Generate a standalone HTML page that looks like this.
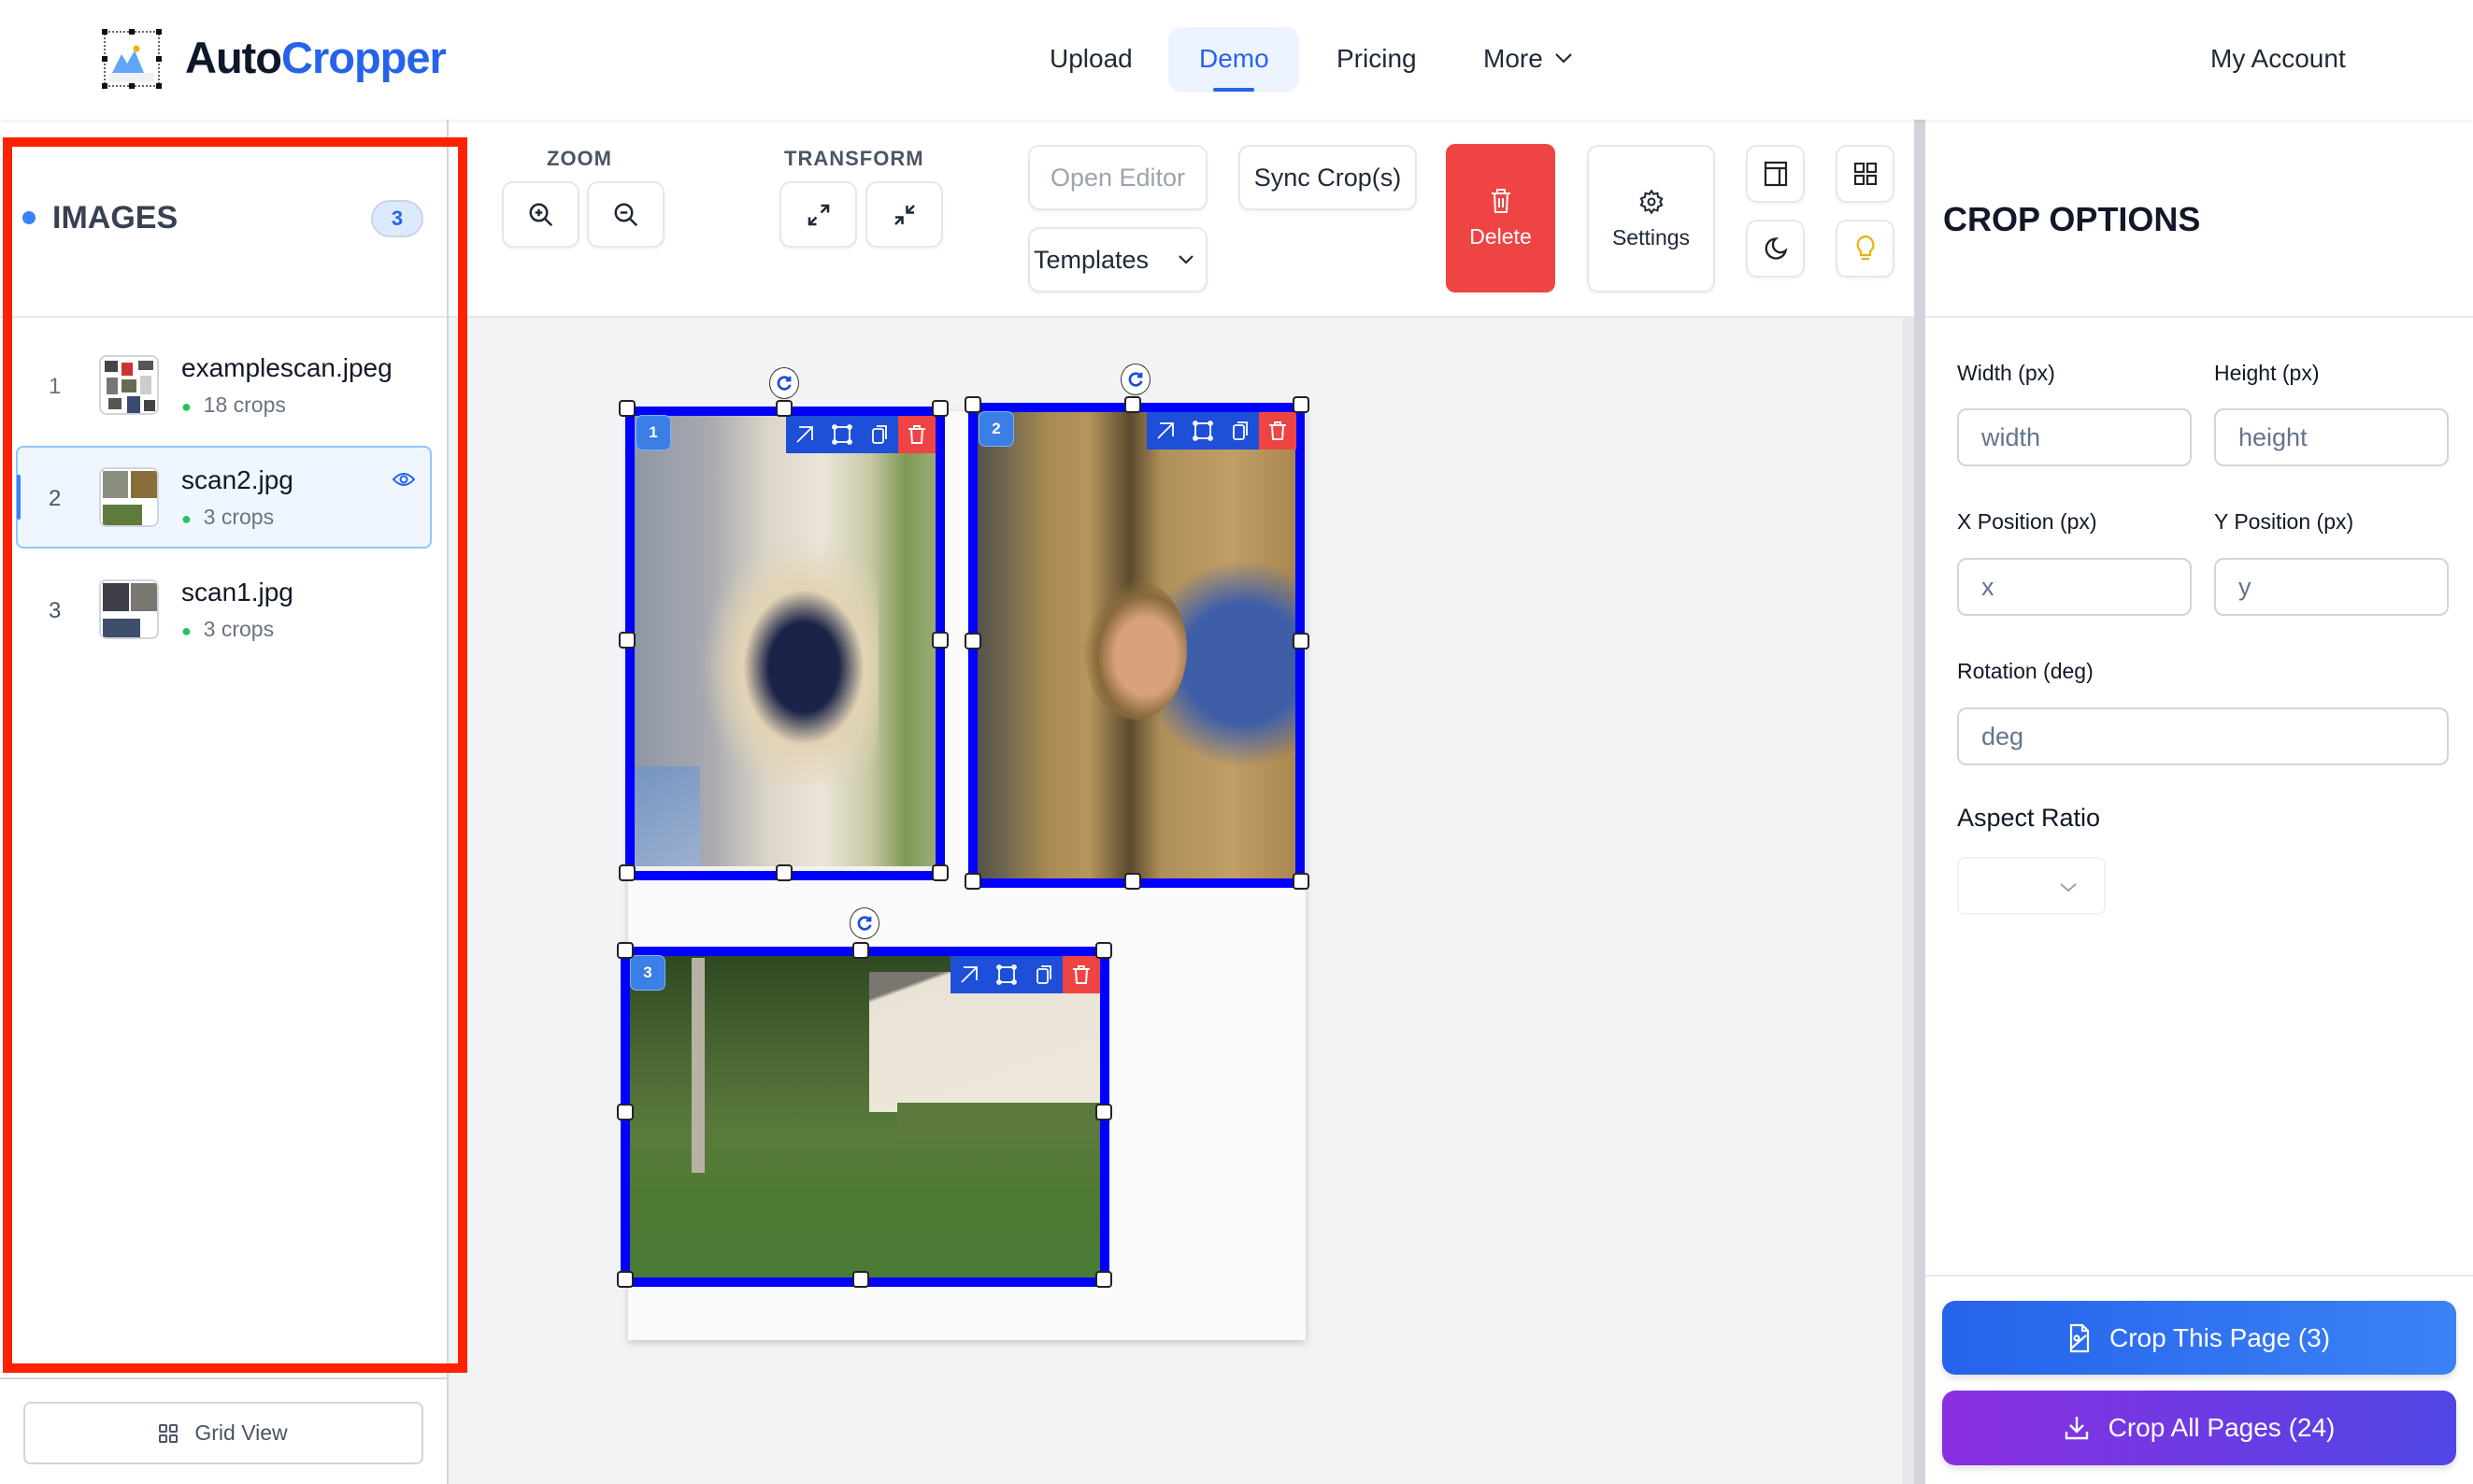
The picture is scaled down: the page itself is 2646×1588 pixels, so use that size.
<!DOCTYPE html>
<html><head><meta charset="utf-8">
<style>
*{box-sizing:border-box;margin:0;padding:0}
body{width:2646px;height:1588px;overflow:hidden;background:#fff;font-family:"Liberation Sans",Arial,sans-serif;position:relative;color:#111827}
.a{position:absolute}
.btn{position:absolute;background:#fff;border:2px solid #e5e7eb;border-radius:12px;display:flex;align-items:center;justify-content:center;box-shadow:0 2px 3px rgba(0,0,0,.05)}
.lbl{position:absolute;font-size:23px;color:#111827}
.inp{position:absolute;border:2px solid #d1d5db;border-radius:10px;background:#fff;font-size:27px;color:#64748b;padding-left:24px;display:flex;align-items:center}
.h{position:absolute;width:18px;height:18px;background:#fff;border:2px solid #222;border-radius:4px}
.rot{position:absolute;width:32px;height:34px;border-radius:50%;background:#fff;border:1.5px solid #333;display:flex;align-items:center;justify-content:center}
.num{position:absolute;width:38px;height:38px;border-radius:7px;background:#3b7ee6;border:1.5px solid #7fb0f5;color:#fff;font-weight:bold;font-size:17px;display:flex;align-items:center;justify-content:center}
.tb{position:absolute;height:40px;display:flex}
.tb div{width:40px;height:40px;background:#1d4fd8;display:flex;align-items:center;justify-content:center}
.tb div.r{background:#ef4444}
</style></head><body>
<!-- header -->
<div class="a" style="left:0;top:0;width:2646px;height:128px;background:#fff;box-shadow:0 2px 4px rgba(0,0,0,.06);z-index:3"></div>
<svg class="a" style="left:108px;top:30px;z-index:4" width="68" height="66" viewBox="0 0 68 66">
<rect x="4" y="4" width="58" height="58" fill="none" stroke="#333" stroke-width="1.5" stroke-dasharray="2 2"/>
<g fill="#111"><rect x="1" y="1" width="6" height="6"/><rect x="30" y="1" width="6" height="6"/><rect x="59" y="1" width="6" height="6"/><rect x="1" y="30" width="6" height="6"/><rect x="59" y="30" width="6" height="6"/><rect x="1" y="59" width="6" height="6"/><rect x="30" y="59" width="6" height="6"/><rect x="59" y="59" width="6" height="6"/></g>
<rect x="9" y="48" width="48" height="10" fill="#eef2f7"/>
<path d="M12 48 L22 28 L28 38 L36 24 L46 48Z" fill="#60a5fa"/><circle cx="38" cy="22" r="3.5" fill="#eab308"/>
</svg>
<div class="a" style="left:198px;top:34px;font-size:47px;font-weight:bold;letter-spacing:-1px;z-index:4"><span style="color:#0f172a">Auto</span><span style="color:#2563eb">Cropper</span></div>
<div class="a" style="left:1123px;top:47px;font-size:28px;color:#1f2937;z-index:4">Upload</div>
<div class="a" style="left:1250px;top:29px;width:140px;height:70px;background:#eef4ff;border-radius:14px;z-index:4"></div>
<div class="a" style="left:1283px;top:47px;font-size:28px;color:#2563eb;z-index:4">Demo</div>
<div class="a" style="left:1298px;top:94px;width:44px;height:4px;background:#2563eb;border-radius:2px;z-index:4"></div>
<div class="a" style="left:1430px;top:47px;font-size:28px;color:#1f2937;z-index:4">Pricing</div>
<div class="a" style="left:1587px;top:47px;font-size:28px;color:#1f2937;z-index:4">More</div>
<svg class="a" style="left:1662px;top:54px;z-index:4" width="22" height="16" viewBox="0 0 22 16"><path d="M3 4 L11 12 L19 4" fill="none" stroke="#1f2937" stroke-width="2.2"/></svg>
<div class="a" style="left:2365px;top:47px;font-size:28px;color:#1f2937;z-index:4">My Account</div>

<!-- left sidebar -->
<div class="a" style="left:0;top:128px;width:480px;height:1460px;background:#fff;border-right:2px solid #d1d5db"></div>
<div class="a" style="left:24px;top:226px;width:14px;height:14px;border-radius:50%;background:#3b82f6"></div>
<div class="a" style="left:56px;top:214px;font-size:34px;font-weight:bold;color:#374151">IMAGES</div>
<div class="a" style="left:397px;top:214px;width:56px;height:40px;border-radius:20px;background:#dbeafe;border:2px solid #cbd5e1;color:#2563eb;font-size:22px;font-weight:bold;display:flex;align-items:center;justify-content:center">3</div>
<div class="a" style="left:0;top:338px;width:478px;height:2px;background:#e5e7eb"></div>

<div class="a" style="left:52px;top:400px;font-size:24px;color:#6b7280">1</div>
<div class="a" style="left:106px;top:380px;width:64px;height:64px;border:2px solid #d1d5db;border-radius:8px;overflow:hidden;background:#fff">
<div class="a" style="left:4px;top:4px;width:14px;height:12px;background:#444"></div><div class="a" style="left:22px;top:6px;width:12px;height:14px;background:#c33"></div><div class="a" style="left:40px;top:4px;width:16px;height:10px;background:#555"></div><div class="a" style="left:6px;top:22px;width:12px;height:18px;background:#777"></div><div class="a" style="left:22px;top:24px;width:16px;height:14px;background:#6a6a50"></div><div class="a" style="left:42px;top:20px;width:12px;height:20px;background:#ccc"></div><div class="a" style="left:8px;top:44px;width:14px;height:12px;background:#555"></div><div class="a" style="left:28px;top:42px;width:14px;height:18px;background:#3a4a70"></div><div class="a" style="left:46px;top:46px;width:12px;height:12px;background:#444"></div></div>
<div class="a" style="left:194px;top:378px;font-size:28px;color:#111827">examplescan.jpeg</div>
<div class="a" style="left:194px;top:420px;font-size:23px;color:#6b7280"><span style="color:#22c55e;font-size:18px">●</span>&nbsp; 18 crops</div>

<div class="a" style="left:17px;top:477px;width:445px;height:110px;border:2px solid #93c5fd;border-radius:8px;background:#eff6ff"></div>
<div class="a" style="left:18px;top:508px;width:4px;height:48px;background:#3b82f6;border-radius:2px"></div>
<div class="a" style="left:52px;top:520px;font-size:24px;color:#4b5563">2</div>
<div class="a" style="left:106px;top:500px;width:64px;height:64px;border:2px solid #d1d5db;border-radius:8px;overflow:hidden;background:#fff">
<div class="a" style="left:2px;top:2px;width:27px;height:29px;background:#8a8e80"></div><div class="a" style="left:32px;top:2px;width:28px;height:29px;background:#8a6e3a"></div><div class="a" style="left:2px;top:38px;width:42px;height:24px;background:#5e7a3c"></div></div>
<div class="a" style="left:194px;top:498px;font-size:28px;color:#111827">scan2.jpg</div>
<div class="a" style="left:194px;top:540px;font-size:23px;color:#6b7280"><span style="color:#22c55e;font-size:18px">●</span>&nbsp; 3 crops</div>
<svg class="a" style="left:420px;top:503px" width="24" height="20" viewBox="0 0 24 20"><path d="M1 10 Q12 -2 23 10 Q12 22 1 10Z" fill="none" stroke="#2563eb" stroke-width="2"/><circle cx="12" cy="10" r="3.5" fill="none" stroke="#2563eb" stroke-width="2"/></svg>

<div class="a" style="left:52px;top:640px;font-size:24px;color:#4b5563">3</div>
<div class="a" style="left:106px;top:620px;width:64px;height:64px;border:2px solid #d1d5db;border-radius:8px;overflow:hidden;background:#fff">
<div class="a" style="left:2px;top:2px;width:28px;height:30px;background:#3e3f48"></div><div class="a" style="left:32px;top:2px;width:28px;height:30px;background:#7a7770"></div><div class="a" style="left:2px;top:40px;width:40px;height:22px;background:#3f4e6a"></div></div>
<div class="a" style="left:194px;top:618px;font-size:28px;color:#111827">scan1.jpg</div>
<div class="a" style="left:194px;top:660px;font-size:23px;color:#6b7280"><span style="color:#22c55e;font-size:18px">●</span>&nbsp; 3 crops</div>

<div class="a" style="left:0;top:1474px;width:478px;height:2px;background:#d1d5db"></div>
<div class="a" style="left:25px;top:1500px;width:428px;height:67px;border:2px solid #d1d5db;border-radius:8px;display:flex;align-items:center;justify-content:center;font-size:23px;color:#4b5563">
<svg width="20" height="20" viewBox="0 0 20 20" style="margin-right:18px"><g fill="none" stroke="#4b5563" stroke-width="2"><rect x="1" y="1" width="7" height="7" rx="1"/><rect x="12" y="1" width="7" height="7" rx="1"/><rect x="1" y="12" width="7" height="7" rx="1"/><rect x="12" y="12" width="7" height="7" rx="1"/></g></svg>Grid View</div>
<!-- red annotation box -->
<div class="a" style="left:3px;top:147px;width:497px;height:1322px;border:10px solid #ff2200;z-index:5"></div>

<!-- toolbar -->
<div class="a" style="left:480px;top:338px;width:1568px;height:2px;background:#e5e7eb"></div>
<div class="a" style="left:585px;top:157px;font-size:22px;font-weight:bold;color:#4b5563;letter-spacing:1px">ZOOM</div>
<div class="btn" style="left:537px;top:194px;width:83px;height:71px"><svg width="30" height="30" viewBox="0 0 24 24" fill="none" stroke="#1f2937" stroke-width="2"><circle cx="10" cy="10" r="7"/><path d="M15 15 L21 21 M10 7 V13 M7 10 H13"/></svg></div>
<div class="btn" style="left:628px;top:194px;width:83px;height:71px"><svg width="30" height="30" viewBox="0 0 24 24" fill="none" stroke="#1f2937" stroke-width="2"><circle cx="10" cy="10" r="7"/><path d="M15 15 L21 21 M7 10 H13"/></svg></div>
<div class="a" style="left:839px;top:157px;font-size:22px;font-weight:bold;color:#4b5563;letter-spacing:1px">TRANSFORM</div>
<div class="btn" style="left:834px;top:194px;width:83px;height:71px"><svg width="30" height="30" viewBox="0 0 24 24" fill="none" stroke="#1f2937" stroke-width="2"><path d="M14 4 H20 V10 M20 4 L14 10 M10 20 H4 V14 M4 20 L10 14"/></svg></div>
<div class="btn" style="left:926px;top:194px;width:83px;height:71px"><svg width="30" height="30" viewBox="0 0 24 24" fill="none" stroke="#1f2937" stroke-width="2"><path d="M14 4 V10 H20 M14 10 L20 4 M4 14 H10 V20 M10 14 L4 20"/></svg></div>
<div class="btn" style="left:1100px;top:155px;width:192px;height:70px;font-size:27px;color:#9ca3af">Open Editor</div>
<div class="btn" style="left:1100px;top:243px;width:192px;height:70px;font-size:27px;color:#1f2937;justify-content:flex-start;padding-left:4px">Templates<svg style="position:absolute;right:10px" width="22" height="16" viewBox="0 0 22 16"><path d="M4 4 L11 11 L18 4" fill="none" stroke="#1f2937" stroke-width="2.2"/></svg></div>
<div class="btn" style="left:1325px;top:155px;width:191px;height:70px;font-size:27px;color:#1f2937">Sync Crop(s)</div>
<div class="a" style="left:1547px;top:154px;width:117px;height:159px;background:#ef4444;border-radius:10px;color:#fff;font-size:23px;display:flex;flex-direction:column;align-items:center;justify-content:center"><svg width="24" height="30" viewBox="0 0 24 30" fill="none" stroke="#fff" stroke-width="2"><path d="M2 7 H22 M8 7 V3 H16 V7 M5 7 L6 27 H18 L19 7 M10 12 V22 M14 12 V22"/></svg><div style="margin-top:10px">Delete</div></div>
<div class="btn" style="left:1698px;top:155px;width:137px;height:158px;flex-direction:column;font-size:23px;color:#1f2937"><svg width="28" height="30" viewBox="0 0 24 24" fill="none" stroke="#1f2937" stroke-width="1.8"><circle cx="12" cy="12" r="3"/><path d="M12 2 L14 5 L17.5 4 L18 7.5 L21.5 9 L20 12 L21.5 15 L18 16.5 L17.5 20 L14 19 L12 22 L10 19 L6.5 20 L6 16.5 L2.5 15 L4 12 L2.5 9 L6 7.5 L6.5 4 L10 5Z"/></svg><div style="margin-top:10px">Settings</div></div>
<div class="btn" style="left:1868px;top:155px;width:63px;height:62px"><svg width="26" height="28" viewBox="0 0 26 28" fill="none" stroke="#222" stroke-width="2.2"><rect x="2" y="2" width="22" height="24"/><path d="M2 8 H24 M17 8 V26"/></svg></div>
<div class="btn" style="left:1964px;top:155px;width:63px;height:62px"><svg width="24" height="24" viewBox="0 0 24 24" fill="none" stroke="#222" stroke-width="2.2"><rect x="1" y="1" width="9" height="9"/><rect x="14" y="1" width="9" height="9"/><rect x="1" y="14" width="9" height="9"/><rect x="14" y="14" width="9" height="9"/></svg></div>
<div class="btn" style="left:1868px;top:235px;width:63px;height:62px"><svg width="28" height="28" viewBox="0 0 24 24" fill="none" stroke="#222" stroke-width="2"><path d="M12 3 A9 9 0 1 0 21 14 A7 7 0 0 1 12 3Z"/></svg></div>
<div class="btn" style="left:1964px;top:235px;width:63px;height:62px"><svg width="24" height="30" viewBox="0 0 24 30" fill="none" stroke="#eab308" stroke-width="2.2"><path d="M12 2 A9 9 0 0 0 7 18 V22 H17 V18 A9 9 0 0 0 12 2Z M8 26 H16"/></svg></div>

<!-- canvas -->
<div class="a" style="left:480px;top:340px;width:1567px;height:1248px;background:#f2f3f5"></div>
<div class="a" style="left:2036px;top:340px;width:12px;height:1248px;background:#e5e7eb"></div>
<div class="a" style="left:2048px;top:128px;width:12px;height:1460px;background:#d1d5db"></div>
<div class="a" style="left:672px;top:440px;width:725px;height:994px;background:#fafafa;box-shadow:0 3px 8px rgba(0,0,0,.18)"></div>

<!-- crop 1 -->
<div class="a" style="left:669px;top:435px;width:342px;height:507px;border:10px solid #0000ff;background:#f4f2ee"></div>
<div class="a" style="left:679px;top:445px;width:322px;height:482px;background:linear-gradient(90deg,#8f96a6 0%,#a8aab0 25%,#dcd6c8 45%,#ece6da 62%,#c9c9a8 78%,#7f9a55 90%,#9cab75 100%)"></div>
<div class="a" style="left:740px;top:560px;width:200px;height:280px;background:radial-gradient(ellipse at 60% 55%,#1b2448 0 22%,#e2d3b5 38%,transparent 65%)"></div>
<div class="a" style="left:679px;top:820px;width:70px;height:107px;background:linear-gradient(160deg,#6f93c8,#9ab3d8);opacity:.8"></div>
<div class="tb" style="left:841px;top:445px"><div><svg width="22" height="22" viewBox="0 0 22 22" fill="none" stroke="#fff" stroke-width="1.8"><path d="M5 3 H19 V17 M19 3 L3 19"/></svg></div><div><svg width="22" height="22" viewBox="0 0 22 22" fill="none" stroke="#fff" stroke-width="1.8"><rect x="3" y="3" width="16" height="16"/><circle cx="3" cy="3" r="2"/><circle cx="19" cy="3" r="2"/><circle cx="3" cy="19" r="2"/><circle cx="19" cy="19" r="2"/></svg></div><div><svg width="22" height="22" viewBox="0 0 22 22" fill="none" stroke="#fff" stroke-width="1.8"><rect x="4" y="5" width="11" height="15" rx="2"/><path d="M8 2 H18 V16"/></svg></div><div class="r"><svg width="20" height="22" viewBox="0 0 20 22" fill="none" stroke="#fff" stroke-width="2"><path d="M1 5 H19 M7 5 V2 H13 V5 M4 5 L5 20 H15 L16 5"/></svg></div></div>
<div class="num" style="left:680px;top:444px">1</div>
<div class="rot" style="left:823px;top:393px"><svg width="18" height="18" viewBox="0 0 20 20" fill="none" stroke="#1d4ed8" stroke-width="3"><path d="M16 6 A7 7 0 1 0 17 12"/><path d="M17 2 V7 H12" stroke-width="2.5"/></svg></div>
<div class="h" style="left:662px;top:428px"></div><div class="h" style="left:830px;top:428px"></div><div class="h" style="left:997px;top:428px"></div>
<div class="h" style="left:662px;top:676px"></div><div class="h" style="left:997px;top:676px"></div>
<div class="h" style="left:662px;top:925px"></div><div class="h" style="left:830px;top:925px"></div><div class="h" style="left:997px;top:925px"></div>

<!-- crop 2 -->
<div class="a" style="left:1036px;top:431px;width:360px;height:519px;border:10px solid #0000ff;background:linear-gradient(90deg,#55524a 0%,#6e654f 8%,#a88a52 22%,#b8965c 35%,#5a4a2e 48%,#b0905a 58%,#c09e66 80%,#a9874f 100%)"></div>
<div class="a" style="left:1200px;top:580px;width:186px;height:260px;background:radial-gradient(ellipse at 70% 50%,#3f5ea8 0 35%,transparent 60%)"></div>
<div class="a" style="left:1160px;top:620px;width:110px;height:150px;border-radius:50%;background:radial-gradient(ellipse at 60% 55%,#d9a27d 0 35%,#8a6a3c 55%,transparent 72%)"></div>
<div class="tb" style="left:1227px;top:441px"><div><svg width="22" height="22" viewBox="0 0 22 22" fill="none" stroke="#fff" stroke-width="1.8"><path d="M5 3 H19 V17 M19 3 L3 19"/></svg></div><div><svg width="22" height="22" viewBox="0 0 22 22" fill="none" stroke="#fff" stroke-width="1.8"><rect x="3" y="3" width="16" height="16"/><circle cx="3" cy="3" r="2"/><circle cx="19" cy="3" r="2"/><circle cx="3" cy="19" r="2"/><circle cx="19" cy="19" r="2"/></svg></div><div><svg width="22" height="22" viewBox="0 0 22 22" fill="none" stroke="#fff" stroke-width="1.8"><rect x="4" y="5" width="11" height="15" rx="2"/><path d="M8 2 H18 V16"/></svg></div><div class="r"><svg width="20" height="22" viewBox="0 0 20 22" fill="none" stroke="#fff" stroke-width="2"><path d="M1 5 H19 M7 5 V2 H13 V5 M4 5 L5 20 H15 L16 5"/></svg></div></div>
<div class="num" style="left:1047px;top:440px">2</div>
<div class="rot" style="left:1199px;top:389px"><svg width="18" height="18" viewBox="0 0 20 20" fill="none" stroke="#1d4ed8" stroke-width="3"><path d="M16 6 A7 7 0 1 0 17 12"/><path d="M17 2 V7 H12" stroke-width="2.5"/></svg></div>
<div class="h" style="left:1032px;top:424px"></div><div class="h" style="left:1203px;top:424px"></div><div class="h" style="left:1383px;top:424px"></div>
<div class="h" style="left:1032px;top:677px"></div><div class="h" style="left:1383px;top:677px"></div>
<div class="h" style="left:1032px;top:934px"></div><div class="h" style="left:1203px;top:934px"></div><div class="h" style="left:1383px;top:934px"></div>

<!-- crop 3 -->
<div class="a" style="left:664px;top:1013px;width:523px;height:364px;border:10px solid #0000ff;background:linear-gradient(180deg,#2f4a22 0%,#4d6a35 35%,#5a7a3c 55%,#4f7a32 75%,#4a7a35 100%)"></div>
<div class="a" style="left:930px;top:1040px;width:247px;height:150px;background:linear-gradient(160deg,#7a7670 0 12%,#e9e3d6 14%,#efe9dc 100%)"></div>
<div class="a" style="left:960px;top:1180px;width:217px;height:40px;background:#5d7a3e"></div>
<div class="a" style="left:740px;top:1025px;width:14px;height:230px;background:#b8b2a4"></div>
<div class="tb" style="left:1017px;top:1023px"><div><svg width="22" height="22" viewBox="0 0 22 22" fill="none" stroke="#fff" stroke-width="1.8"><path d="M5 3 H19 V17 M19 3 L3 19"/></svg></div><div><svg width="22" height="22" viewBox="0 0 22 22" fill="none" stroke="#fff" stroke-width="1.8"><rect x="3" y="3" width="16" height="16"/><circle cx="3" cy="3" r="2"/><circle cx="19" cy="3" r="2"/><circle cx="3" cy="19" r="2"/><circle cx="19" cy="19" r="2"/></svg></div><div><svg width="22" height="22" viewBox="0 0 22 22" fill="none" stroke="#fff" stroke-width="1.8"><rect x="4" y="5" width="11" height="15" rx="2"/><path d="M8 2 H18 V16"/></svg></div><div class="r"><svg width="20" height="22" viewBox="0 0 20 22" fill="none" stroke="#fff" stroke-width="2"><path d="M1 5 H19 M7 5 V2 H13 V5 M4 5 L5 20 H15 L16 5"/></svg></div></div>
<div class="num" style="left:674px;top:1022px">3</div>
<div class="rot" style="left:909px;top:971px"><svg width="18" height="18" viewBox="0 0 20 20" fill="none" stroke="#1d4ed8" stroke-width="3"><path d="M16 6 A7 7 0 1 0 17 12"/><path d="M17 2 V7 H12" stroke-width="2.5"/></svg></div>
<div class="h" style="left:660px;top:1008px"></div><div class="h" style="left:912px;top:1008px"></div><div class="h" style="left:1172px;top:1008px"></div>
<div class="h" style="left:660px;top:1181px"></div><div class="h" style="left:1172px;top:1181px"></div>
<div class="h" style="left:660px;top:1360px"></div><div class="h" style="left:912px;top:1360px"></div><div class="h" style="left:1172px;top:1360px"></div>

<!-- right panel -->
<div class="a" style="left:2060px;top:128px;width:586px;height:1460px;background:#fff"></div>
<div class="a" style="left:2079px;top:214px;font-size:36px;font-weight:bold;color:#111827">CROP OPTIONS</div>
<div class="a" style="left:2060px;top:338px;width:586px;height:2px;background:#e5e7eb"></div>
<div class="lbl" style="left:2094px;top:386px">Width (px)</div>
<div class="lbl" style="left:2369px;top:386px">Height (px)</div>
<div class="inp" style="left:2094px;top:437px;width:251px;height:62px">width</div>
<div class="inp" style="left:2369px;top:437px;width:251px;height:62px">height</div>
<div class="lbl" style="left:2094px;top:545px">X Position (px)</div>
<div class="lbl" style="left:2369px;top:545px">Y Position (px)</div>
<div class="inp" style="left:2094px;top:597px;width:251px;height:62px">x</div>
<div class="inp" style="left:2369px;top:597px;width:251px;height:62px">y</div>
<div class="lbl" style="left:2094px;top:705px">Rotation (deg)</div>
<div class="inp" style="left:2094px;top:757px;width:526px;height:62px">deg</div>
<div class="lbl" style="left:2094px;top:860px;font-size:27px">Aspect Ratio</div>
<div class="a" style="left:2094px;top:917px;width:159px;height:62px;border:2px solid #f1f2f4;border-radius:8px"><svg style="position:absolute;left:106px;top:24px" width="22" height="14" viewBox="0 0 22 14"><path d="M3 3 L11 10 L19 3" fill="none" stroke="#9ca3af" stroke-width="2"/></svg></div>
<div class="a" style="left:2060px;top:1364px;width:586px;height:2px;background:#e5e7eb"></div>
<div class="a" style="left:2078px;top:1392px;width:550px;height:79px;border-radius:14px;background:linear-gradient(90deg,#2563eb,#3b82f6);box-shadow:0 4px 8px rgba(0,0,0,.12);color:#fff;font-size:28px;display:flex;align-items:center;justify-content:center">
<svg width="24" height="32" viewBox="0 0 24 32" fill="none" stroke="#fff" stroke-width="2.2" style="margin-right:20px"><path d="M3 2 H15 L21 8 V30 H3Z M15 2 V8 H21"/><circle cx="9" cy="16" r="2.5"/><path d="M3 27 L19 13"/></svg>Crop This Page (3)</div>
<div class="a" style="left:2078px;top:1488px;width:550px;height:80px;border-radius:14px;background:linear-gradient(90deg,#8b2fe0,#5046e5);box-shadow:0 4px 8px rgba(0,0,0,.12);color:#fff;font-size:28px;display:flex;align-items:center;justify-content:center">
<svg width="28" height="28" viewBox="0 0 28 28" fill="none" stroke="#fff" stroke-width="2.4" style="margin-right:20px"><path d="M14 2 V18 M7 11 L14 18 L21 11 M3 18 V25 H25 V18"/></svg>Crop All Pages (24)</div>
</body></html>
